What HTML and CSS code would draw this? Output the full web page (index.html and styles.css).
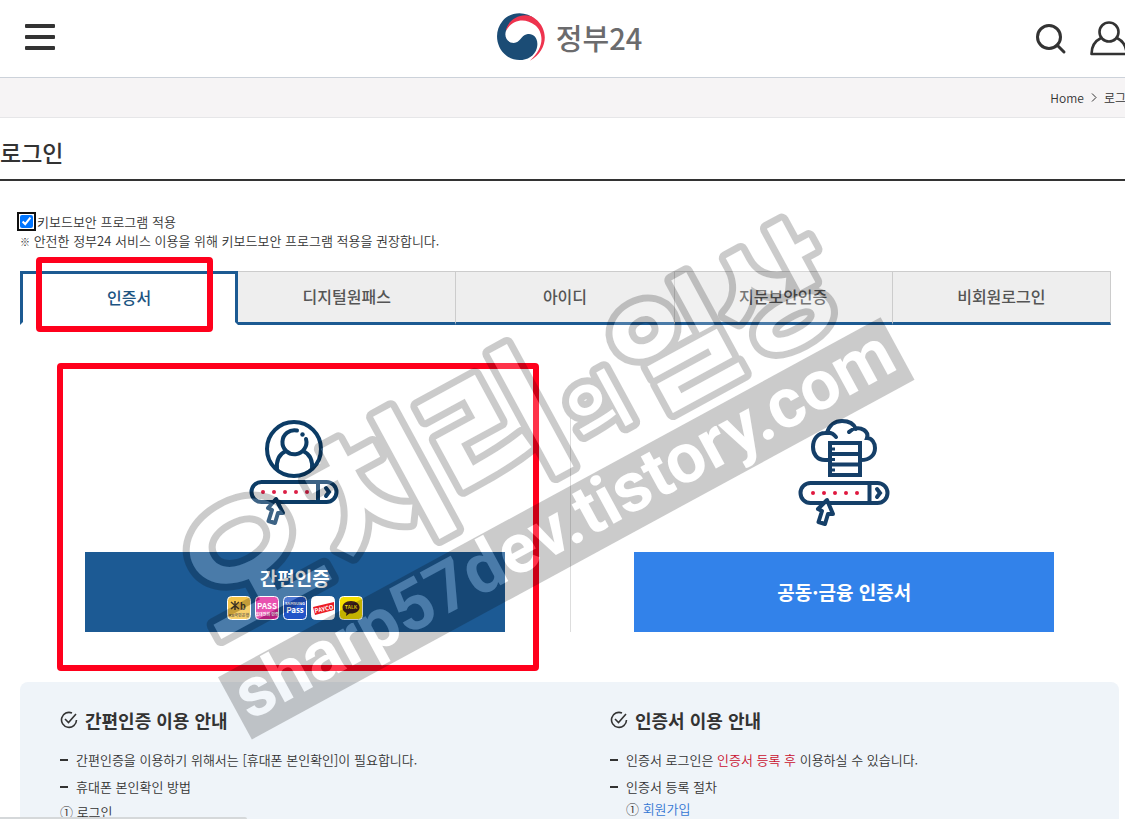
FILE: index.html
```html
<!DOCTYPE html>
<html lang="ko">
<head>
    <meta charset="UTF-8">
    <meta name="viewport" content="width=device-width, initial-scale=1.0">
    <title>로그인 | 정부24</title>
    <link rel="stylesheet" href="styles.css">
</head>
<body>

    <header class="header">
        <button class="menu-btn" aria-label="메뉴"><span></span><span></span><span></span></button>
        <a href="#" class="logo">
            <svg width="50" height="50" viewBox="48 36 152 150" aria-hidden="true">
                <path fill="#1b4c75" d="M168 58C140 32 94 32 68 62C42 92 46 142 80 168C112 192 162 182 172 145C180 115 160 98 142 103C122 108 122 129 102 129C82 129 70 108 80 88C95 55 135 38 168 58Z"/>
                <path fill="#ee334e" d="M78 92C84 54 136 30 168 56C210 88 206 154 151 183C196 145 194 97 167 75C136 51 98 57 78 92Z"/>
            </svg>
            <span>정부24</span>
        </a>
        <div class="header-icons">
            <button aria-label="검색">
                <svg width="32" height="32" viewBox="0 0 32 32" fill="none" stroke="#333" stroke-width="3">
                    <circle cx="13" cy="14" r="11.500"/>
                    <path d="M21 22L28 29" stroke-linecap="round"/>
                </svg>
            </button>
            <button aria-label="마이페이지">
                <svg width="38" height="36" viewBox="0 0 38 36" fill="none" stroke="#333" stroke-width="2.600">
                    <circle cx="19" cy="11" r="9.500"/>
                    <path d="M11 17C5 20 1.500 26 1.500 33H36.500C36.500 26 33 20 27 17" stroke-linejoin="round"/>
                </svg>
            </button>
        </div>
    </header>

    <nav class="breadcrumb">
        <a href="#">Home</a>
        <svg width="6" height="9" viewBox="0 0 6 9" fill="none" stroke="#333"><path d="M1 .5L5 4.500L1 8.500"/></svg>
        <a href="#">로그인</a>
    </nav>

    <h1 class="page-title">로그인</h1>

    <main class="content">
        <div class="security">
            <label><input type="checkbox" checked>키보드보안 프로그램 적용</label>
            <p><span class="note-mark">※</span> 안전한 정부24 서비스 이용을 위해 키보드보안 프로그램 적용을 권장합니다.</p>
        </div>

        <div class="tabs">
            <button class="tab active">인증서<span class="mark mark-tab"></span></button>
            <button class="tab">디지털원패스</button>
            <button class="tab">아이디</button>
            <button class="tab">지문보안인증</button>
            <button class="tab">비회원로그인</button>
        </div>

        <div class="methods">
            <section class="method">
                <svg width="94" height="108" viewBox="0 0 94 108" fill="none" stroke="#0c3c66" stroke-width="4" aria-hidden="true">
                    <circle cx="46" cy="31" r="27"/>
                    <path d="M49 12.500A12 12 0 1 0 58 21" stroke-linecap="round"/>
                    <path d="M29 52C28 42 31 36 38 33M64 52C65 42 62 36 55 33"/>
                    <circle cx="54.500" cy="16.500" r="2.200" fill="#0c3c66" stroke="none"/>
                    <rect x="3.500" y="64" width="85" height="20" rx="10"/>
                    <path d="M70 64V84"/>
                    <g fill="#dc1f46" stroke="none">
                        <circle cx="15" cy="74" r="2"/><circle cx="26" cy="74" r="2"/><circle cx="37" cy="74" r="2"/><circle cx="48" cy="74" r="2"/><circle cx="59" cy="74" r="2"/>
                    </g>
                    <path d="M78 70L81 74L78 78" stroke-linecap="round"/>
                    <path d="M28 81L20 90L24 92L20.500 103L27 105L30 95L35 95Z" fill="#fff" stroke-linejoin="round"/>
                </svg>
                <button class="login-btn simple">
                    <span>간편인증</span>
                    <svg class="apps" width="136" height="24" viewBox="0 0 136 24" aria-hidden="true">
                        <g stroke="#fff" stroke-width="1">
                            <rect x=".5" y=".5" width="23" height="23" rx="4" fill="#f6c548"/>
                            <rect x="28.500" y=".5" width="23" height="23" rx="4" fill="#e3269c"/>
                            <rect x="56.500" y=".5" width="23" height="23" rx="4" fill="#2355c8"/>
                            <rect x="84.500" y=".5" width="23" height="23" rx="4" fill="#fff"/>
                            <rect x="112.500" y=".5" width="23" height="23" rx="4" fill="#f5df00"/>
                        </g>
                        <path d="M8 5V14M4 6L12 13M12 6L4 13" stroke="#453b2b" stroke-width="1.500"/>
                        <text x="13" y="14" class="app-text" font-size="9" fill="#453b2b">b</text>
                        <text x="12" y="21" class="app-text mid" font-size="4" fill="#5e4d28">KB국민은행</text>
                        <text x="40" y="13" class="app-text mid" font-size="8" fill="#fff">PASS</text>
                        <text x="40" y="20" class="app-text mid" font-size="4" fill="#fff">휴대전화 인증</text>
                        <text x="68" y="9" class="app-text mid" font-size="4" fill="#fff">SAMSUNG</text>
                        <text x="68" y="17" class="app-text mid" font-size="8" fill="#fff">Pass</text>
                        <path d="M86 11L107 6V14L88 19Z" fill="#ec1c24"/>
                        <text x="97" y="15" class="app-text mid" font-size="6" fill="#fff" transform="rotate(-12 97 13)">PAYCO</text>
                        <path d="M124 5C118.500 5 115.500 8 115.500 11.500C115.500 14 117 16 119.500 17L119 20L122.500 17.500C128.500 18 132.500 15 132.500 11.500C132.500 8 129.500 5 124 5Z" fill="#3a201c"/>
                        <text x="124" y="13" class="app-text mid" font-size="5" fill="#f5df00">TALK</text>
                    </svg>
                </button>
                <span class="mark mark-method"></span>
            </section>
            <section class="method">
                <svg width="94" height="108" viewBox="0 0 94 108" fill="none" stroke="#153f68" stroke-width="4" aria-hidden="true">
                    <path d="M32 42H28C20 42 16 36 16 29C16 21 21 15 28 15C33 14 37 16 39 19M30 15C32 7 38 3 45 3C52 3 57 6 59 11M52 14C56 10 62 9 67 12C70 14 71 17 70 20C75 20 78 25 78 30C78 37 73 42 64 42" stroke-linecap="round"/>
                    <rect x="33" y="25" width="30" height="32"/>
                    <path d="M33 36H63M33 46.500H63"/>
                    <path d="M33 31H38M33 41.500H38M33 52H38" stroke-width="3"/>
                    <rect x="3.500" y="65" width="87" height="20" rx="10"/>
                    <path d="M72.500 65V85"/>
                    <g fill="#e0183f" stroke="none">
                        <circle cx="16" cy="75" r="2"/><circle cx="27" cy="75" r="2"/><circle cx="38" cy="75" r="2"/><circle cx="49" cy="75" r="2"/><circle cx="60" cy="75" r="2"/>
                    </g>
                    <path d="M80 71L83 75L80 79" stroke-linecap="round"/>
                    <path d="M30 82L21 91L25 93L21.500 104L28 106L31 96L36 96Z" fill="#fff" stroke-linejoin="round"/>
                </svg>
                <button class="login-btn joint"><span>공동·금융 인증서</span></button>
            </section>
        </div>

        <div class="guide">
            <section>
                <h2>
                    <svg width="18" height="18" viewBox="0 0 18 18" fill="none" stroke="#333" stroke-width="1.600"><path d="M12 2A7.500 7.500 0 1 0 16.500 9M5 8L8.500 11.500L16 3"/></svg>
                    간편인증 이용 안내
                </h2>
                <ul>
                    <li>간편인증을 이용하기 위해서는 [휴대폰 본인확인]이 필요합니다.</li>
                    <li>휴대폰 본인확인 방법</li>
                </ul>
                <p class="step"><span>①</span> 로그인</p>
            </section>
            <section>
                <h2>
                    <svg width="18" height="18" viewBox="0 0 18 18" fill="none" stroke="#333" stroke-width="1.600"><path d="M12 2A7.500 7.500 0 1 0 16.500 9M5 8L8.500 11.500L16 3"/></svg>
                    인증서 이용 안내
                </h2>
                <ul>
                    <li>인증서 로그인은 <em>인증서 등록 후</em> 이용하실 수 있습니다.</li>
                    <li>인증서 등록 절차</li>
                </ul>
                <p class="step sub"><span>①</span> <a href="#">회원가입</a></p>
            </section>
        </div>
    </main>

    <div class="status-bar"></div>

    <svg class="watermark" width="1125" height="819" viewBox="0 0 1125 819" aria-hidden="true">
        <g transform="translate(566 528) rotate(-28.500)">
            <g class="watermark-title">
                <text y="-64" font-size="150"><tspan x="-362">오</tspan><tspan x="-218">치</tspan><tspan x="-86">리</tspan></text>
                <text y="-67" x="56" font-size="66">의</text>
                <text y="-60" font-size="128"><tspan x="124">일</tspan><tspan x="238">상</tspan></text>
            </g>
            <rect x="-377" y="-35" width="754" height="71"/>
            <text class="watermark-url" x="0" y="19" font-size="70">sharp57dev.tistory.com</text>
        </g>
    </svg>

</body>
</html>
```
FILE: styles.css
```css
* {
    margin: 0;
    padding: 0;
    box-sizing: border-box;
}

body {
    position: relative;
    min-height: 100vh;
    max-height: 100vh;
    overflow: hidden;
    background-color: #fff;
    color: #333;
    font-family: "Noto Sans CJK KR", "Noto Sans", sans-serif;
    font-size: 13px;
    font-weight: 350;
}

button {
    border: none;
    background: none;
    font-family: inherit;
    cursor: pointer;
}

a {
    color: inherit;
    text-decoration: none;
}

svg {
    display: block;
    flex-shrink: 0;
}

.header {
    display: grid;
    grid-template-columns: 1fr auto 1fr;
    align-items: center;
    height: 78px;
    padding: 0 0 3px 25px;
    border-bottom: 1px solid #ccd2da;
}

.menu-btn {
    display: flex;
    flex-direction: column;
    gap: 7px;
    width: 30px;
}

.menu-btn span {
    height: 4px;
    border-radius: 1px;
    background-color: #333;
}

.logo {
    display: flex;
    align-items: center;
    gap: 10px;
    margin-right: 12px;
    color: #6b6b6d;
    font-size: 29px;
    font-weight: 500;
    line-height: 48px;
}

.header-icons {
    display: flex;
    justify-content: flex-end;
    align-items: center;
    gap: 22px;
    margin: 4px -3px 0 0;
}

.breadcrumb {
    display: flex;
    justify-content: flex-end;
    align-items: center;
    gap: 7px;
    height: 40px;
    margin-right: -14px;
    padding-right: 2px;
    background-color: #f6f4f5;
    border-bottom: 1px solid #e6e6e8;
    font-size: 12px;
}

.page-title {
    padding: 16px 0 9px;
    border-bottom: 2px solid #333;
    font-size: 23px;
    font-weight: 500;
    line-height: 36px;
}

.content {
    padding: 31px 6px 0 20px;
}

.security {
    line-height: 19px;
}

.security label {
    display: flex;
    align-items: center;
    gap: 4px;
}

.security input {
    width: 13px;
    height: 13px;
    outline: 2px solid #101010;
    outline-offset: 1px;
    border-radius: 2px;
}

.note-mark {
    font-size: 10px;
}

.tabs {
    display: flex;
    margin: 20px 8px 0 0;
}

.tab {
    position: relative;
    width: 20%;
    height: 54px;
    padding-bottom: 3px;
    background-color: #eee;
    border-top: 1px solid #ccc;
    border-right: 1px solid #ccc;
    border-bottom: 3px solid #1c5a92;
    color: #555;
    font-size: 16px;
    font-weight: 500;
}

.tab.active {
    background-color: #fff;
    border: 3px solid #1c5a92;
    border-bottom: 3px solid transparent;
    background-clip: padding-box;
    color: #1c5482;
}

.mark {
    position: absolute;
    border: 6px solid #ff001c;
    border-radius: 4px;
    pointer-events: none;
}

.mark-tab {
    top: -17px;
    right: 22px;
    bottom: -10px;
    left: 13px;
}

.methods {
    display: flex;
    margin-top: 93px;
}

.method {
    position: relative;
    display: flex;
    flex: 1;
    flex-direction: column;
    align-items: center;
    gap: 26px;
}

.method:first-child {
    box-shadow: 1px 0 #ddd;
}

.mark-method {
    top: -55px;
    right: 31px;
    bottom: -39px;
    left: 37px;
}

.login-btn {
    display: flex;
    flex-direction: column;
    justify-content: center;
    align-items: center;
    width: 420px;
    height: 80px;
    color: #fff;
    font-size: 19px;
    font-weight: 700;
    line-height: 28px;
}

.simple {
    background-color: #1c5a94;
    gap: 4px;
}

.joint {
    background-color: #3282ea;
}

.app-text {
    font-family: "Noto Sans CJK KR", sans-serif;
    font-weight: 700;
}

.mid {
    text-anchor: middle;
}

.guide {
    display: flex;
    margin-top: 50px;
    padding: 24px 0 40px 40px;
    border-radius: 8px;
    background-color: #eff4f9;
}

.guide section {
    flex: 1;
}

.guide section:first-child {
    flex: 0 0 550px;
}

.guide h2 {
    display: flex;
    align-items: center;
    gap: 7px;
    margin-bottom: 12px;
    font-size: 18px;
    font-weight: 700;
    line-height: 28px;
}

.guide ul {
    list-style: none;
}

.guide li {
    display: flex;
    align-items: center;
    white-space: pre;
    line-height: 27px;
}

.guide li::before {
    content: "";
    width: 8px;
    height: 2px;
    margin-right: 8px;
    background-color: #333;
}

.guide em {
    color: #c8102e;
    font-style: normal;
}

.step {
    line-height: 24px;
}

.step.sub {
    padding-left: 16px;
    line-height: 18px;
}

.step a {
    color: #3577d4;
}

.status-bar {
    position: absolute;
    bottom: 0;
    left: 0;
    width: 247px;
    height: 2px;
    border-top-right-radius: 2px;
    background-color: #d5d8da;
}

.watermark {
    position: absolute;
    top: 0;
    left: 0;
    opacity: 0.2;
    pointer-events: none;
}

.watermark-title {
    fill: #fff;
    stroke: #000;
    stroke-width: 14px;
    stroke-linejoin: round;
    paint-order: stroke;
    font-weight: 700;
}

.watermark-url {
    fill: #fff;
    font-family: Roboto, sans-serif;
    font-weight: 700;
    text-anchor: middle;
}
```
